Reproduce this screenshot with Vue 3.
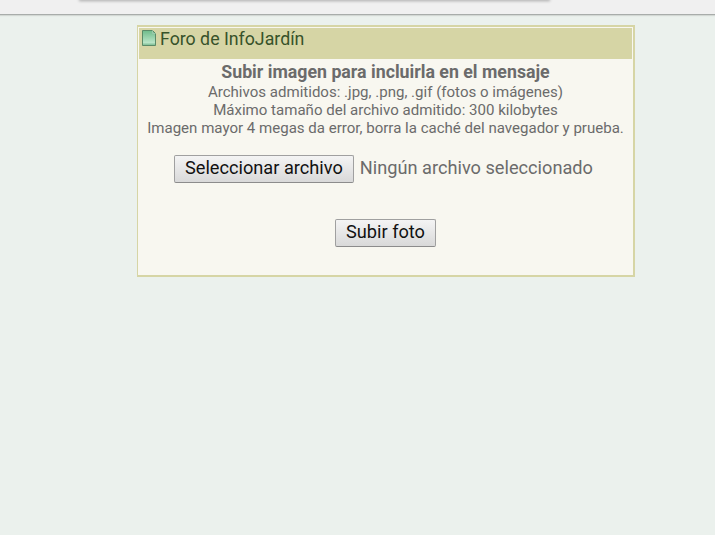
<template>
  <div class="page">
    <div class="topbar">
      <div class="topbar-menu"></div>
    </div>
    <div class="panel">
      <div class="panel-title">
        <svg class="leaf-icon" width="14" height="16" viewBox="0 0 14 16">
          <defs>
            <linearGradient id="leaf" x1="0" y1="0" x2="0" y2="1">
              <stop offset="0" stop-color="#6fbb8a" />
              <stop offset="0.8" stop-color="#b8e4c6" />
              <stop offset="1" stop-color="#74b88d" />
            </linearGradient>
          </defs>
          <path d="M0.5 0.5H10.5L13.5 3.5V15.5H0.5Z" fill="url(#leaf)" stroke="#5b8a68" />
          <path d="M10.5 0.5V3.5H13.5" fill="none" stroke="#9cc7aa" />
        </svg>
        <span>Foro de InfoJardín</span>
      </div>
      <form class="upload-form" @submit.prevent>
        <h1>Subir imagen para incluirla en el mensaje</h1>
        <p>Archivos admitidos: .jpg, .png, .gif (fotos o imágenes)</p>
        <p>Máximo tamaño del archivo admitido: 300 kilobytes</p>
        <p>Imagen mayor 4 megas da error, borra la caché del navegador y prueba.</p>
        <div class="file-row">
          <button type="button" class="btn">Seleccionar archivo</button>
          <span class="file-name">{{ fileName }}</span>
        </div>
        <button type="submit" class="btn submit-btn">Subir foto</button>
      </form>
    </div>
  </div>
</template>

<script setup>
import { ref } from 'vue'

const fileName = ref('Ningún archivo seleccionado')
</script>

<style>
html, body {
  margin: 0;
  background: #ebf1ed;
}
</style>

<style scoped>
.page {
  min-height: 535px;
  background: #ebf1ed;
  font-family: Roboto, "Liberation Sans", sans-serif;
  overflow: hidden;
}

.topbar {
  height: 14px;
  background: #f0f0f0;
  border-bottom: 1px solid #a8acaa;
  box-shadow: 0 1px 1px rgba(0, 0, 0, 0.1);
  padding-left: 80px;
}

.topbar-menu {
  width: 469px;
  height: 0;
  box-shadow: 0 0 3px 1px rgba(0, 0, 0, 0.35);
}

.panel {
  width: 494px;
  height: 247px;
  margin: 10px 0 0 137px;
  border: 2px solid #d6d5a5;
  border-left-width: 1px;
  background: #f8f7f0;
  padding: 1px 0 0 1px;
  box-sizing: content-box;
}

.panel-title {
  display: flex;
  align-items: flex-start;
  gap: 4px;
  height: 31px;
  margin-right: 1px;
  padding: 2px 0 0 3px;
  box-sizing: border-box;
  background: #d6d5a5;
  color: #37522a;
  font-size: 17.75px;
  line-height: 18px;
}

.upload-form {
  text-align: center;
  color: #6b6b6b;
  font-size: 15.05px;
  line-height: 18px;
  padding: 3px 1px 0 0;
}

.upload-form h1 {
  margin: 0 0 1px;
  font-size: 17.75px;
  line-height: 20px;
  font-weight: 700;
  color: #6b6b6b;
}

.upload-form p {
  margin: 0;
}

.file-row {
  display: flex;
  justify-content: center;
  align-items: center;
  gap: 6px;
  margin-top: 18px;
  padding-right: 4px;
  font-size: 18.2px;
  color: #6b6b6b;
}

.file-name {
  margin-bottom: 2px;
}

.btn {
  font-family: inherit;
  font-size: 18.2px;
  line-height: 20px;
  color: #111;
  border: 1px solid #a0a0a0;
  border-bottom-color: #8c8c8c;
  border-radius: 2px;
  background: linear-gradient(#f4f4f4, #d9d9d9);
  padding: 0 10px 3px;
  height: 28px;
  box-sizing: border-box;
}

.submit-btn {
  display: block;
  margin: 36px auto 0;
}
</style>
